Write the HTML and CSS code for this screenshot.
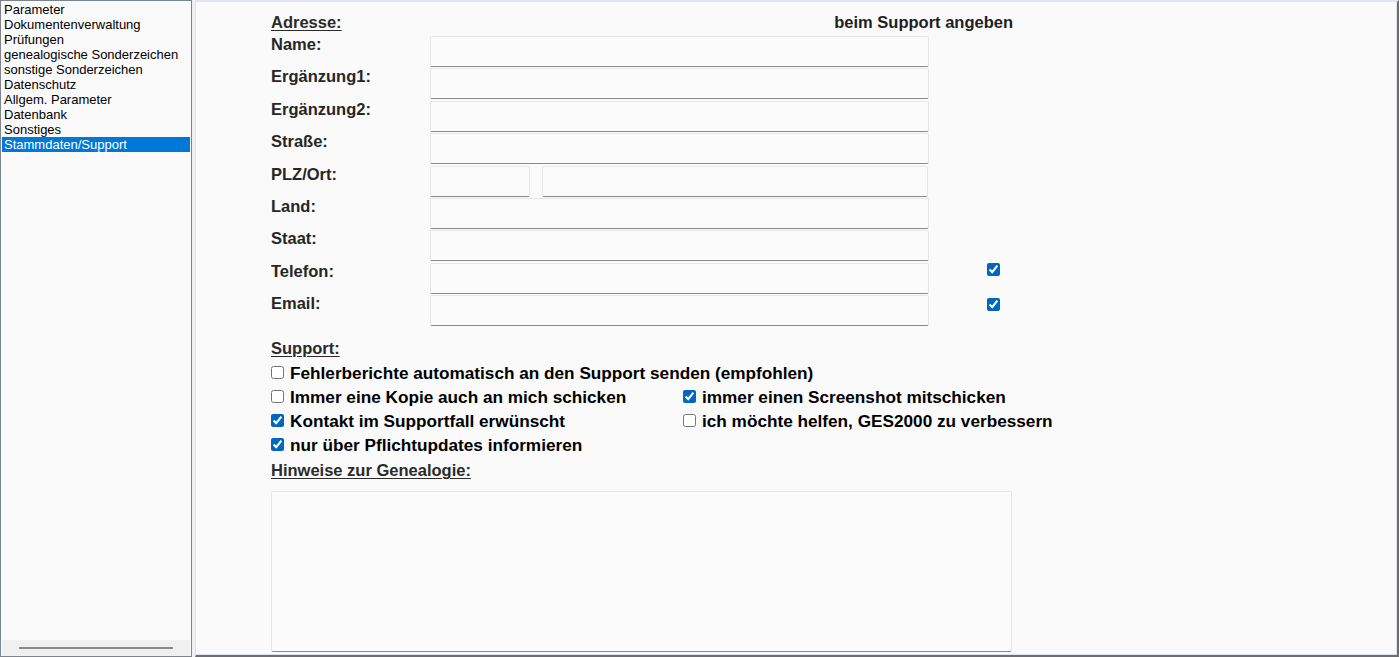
FILE: index.html
```html
<!DOCTYPE html>
<html lang="de">
<head>
<meta charset="utf-8">
<title>Stammdaten/Support</title>
<link rel="stylesheet" href="styles.css">
</head>
<body>
<aside class="sidebar">
  <ul class="nav">
    <li class="nav-item">Parameter</li>
    <li class="nav-item">Dokumentenverwaltung</li>
    <li class="nav-item">Prüfungen</li>
    <li class="nav-item">genealogische Sonderzeichen</li>
    <li class="nav-item">sonstige Sonderzeichen</li>
    <li class="nav-item">Datenschutz</li>
    <li class="nav-item">Allgem. Parameter</li>
    <li class="nav-item">Datenbank</li>
    <li class="nav-item">Sonstiges</li>
    <li class="nav-item is-selected">Stammdaten/Support</li>
  </ul>
  <div class="hscroll"><div class="hscroll-thumb"></div></div>
</aside>
<div class="divider"></div>
<main class="main">
  <div class="header-row">
    <h2 class="section-title">Adresse:</h2>
    <span class="support-hint">beim Support angeben</span>
  </div>
  <div class="address-grid">
    <label class="field-label">Name:</label>
    <input class="field" type="text">
    <span></span>

    <label class="field-label">Ergänzung1:</label>
    <input class="field" type="text">
    <span></span>

    <label class="field-label">Ergänzung2:</label>
    <input class="field" type="text">
    <span></span>

    <label class="field-label">Straße:</label>
    <input class="field" type="text">
    <span></span>

    <label class="field-label">PLZ/Ort:</label>
    <div class="plz-row">
      <input class="field field-plz" type="text">
      <input class="field field-ort" type="text">
    </div>
    <span></span>

    <label class="field-label">Land:</label>
    <input class="field" type="text">
    <span></span>

    <label class="field-label">Staat:</label>
    <input class="field" type="text">
    <span></span>

    <label class="field-label">Telefon:</label>
    <input class="field" type="text">
    <input class="check side-check side-check-tel" type="checkbox" checked>

    <label class="field-label">Email:</label>
    <input class="field" type="text">
    <input class="check side-check" type="checkbox" checked>
  </div>

  <h2 class="section-title support-title">Support:</h2>
  <div class="support-grid">
    <label class="check-row span-2"><input class="check" type="checkbox">Fehlerberichte automatisch an den Support senden (empfohlen)</label>
    <label class="check-row"><input class="check" type="checkbox">Immer eine Kopie auch an mich schicken</label>
    <label class="check-row"><input class="check" type="checkbox" checked>immer einen Screenshot mitschicken</label>
    <label class="check-row"><input class="check" type="checkbox" checked>Kontakt im Supportfall erwünscht</label>
    <label class="check-row"><input class="check" type="checkbox">ich möchte helfen, GES2000 zu verbessern</label>
    <label class="check-row"><input class="check" type="checkbox" checked>nur über Pflichtupdates informieren</label>
  </div>

  <h2 class="section-title notes-title">Hinweise zur Genealogie:</h2>
  <textarea class="notes"></textarea>
</main>
</body>
</html>
```

FILE: styles.css
```css
* { box-sizing: border-box; }

html, body {
  margin: 0;
  padding: 0;
}

body {
  width: 1399px;
  height: 657px;
  display: flex;
  background: #f0f0f0;
  font-family: "Liberation Sans", Arial, sans-serif;
  overflow: hidden;
}

/* ---------- sidebar ---------- */
.sidebar {
  width: 192px;
  height: 657px;
  border: 1px solid #7e848f;
  background: #fafafa;
  display: flex;
  flex-direction: column;
  justify-content: space-between;
  padding: 1px 1px 0 1px;
}

.nav {
  list-style: none;
  margin: 0;
  padding: 0;
}

.nav-item {
  font-size: 13px;
  line-height: 15px;
  height: 15px;
  padding-left: 2px;
  color: #000;
  white-space: nowrap;
}

.nav-item.is-selected {
  background: #0078d7;
  color: #fff;
}

.hscroll {
  height: 16px;
  background: #f0f0f0;
  display: flex;
  align-items: center;
  padding: 0 17px;
}

.hscroll-thumb {
  height: 2px;
  width: 100%;
  background: #8a8a8a;
}

.divider {
  width: 3px;
  flex: none;
}

/* ---------- main ---------- */
.main {
  flex: 1;
  height: 657px;
  background: #fafafa;
  border-top: 2px solid #e1e5ee;
  border-left: 1px solid #e1e5ee;
  border-right: 2px solid #6e6e6e;
  border-bottom: 2px solid #6e6e6e;
  box-shadow: inset -1px -1px 0 #dfe3ee;
  padding: 10px 0 0 75px;
  color: #262626;
  font-size: 16.5px;
  font-weight: bold;
}

.header-row {
  display: flex;
  align-items: center;
  height: 20px;
  width: 742px;
  justify-content: space-between;
}

.section-title {
  margin: 0;
  font-size: 16.5px;
  font-weight: bold;
  line-height: 20px;
  text-decoration: underline;
  text-decoration-thickness: 1px;
  text-underline-offset: 2px;
  color: #2b2b2b;
}

.support-hint {
  line-height: 20px;
  color: #1f1f1f;
}

.address-grid {
  margin-top: 4px;
  display: grid;
  grid-template-columns: 159px 499px 71px;
  grid-auto-rows: 31px;
  row-gap: 1.375px;
}

.field-label {
  line-height: 17px;
  align-self: start;
  white-space: nowrap;
}

.field {
  display: block;
  width: 100%;
  height: 31px;
  margin: 0;
  background: #fbfbfb;
  border: 1px solid #e6e6e6;
  border-bottom: 1px solid #8a8a8a;
  border-radius: 2px;
  outline: none;
  font: inherit;
}

.plz-row {
  display: flex;
  gap: 12px;
}

.field-plz {
  width: 100px;
  flex: none;
}

.field-ort {
  width: 386px;
  flex: none;
}

.check {
  width: 13px;
  height: 13px;
  margin: 0;
  accent-color: #0067c0;
  flex: none;
}

.side-check {
  align-self: start;
  justify-self: end;
  margin-top: 3px;
}

.side-check-tel {
  margin-top: 0;
}

.support-title {
  margin-top: 12px;
}

.support-grid {
  margin-top: 2px;
  display: grid;
  grid-template-columns: 412px auto;
  grid-auto-rows: 24px;
  width: 820px;
}

.check-row {
  display: flex;
  align-items: center;
  gap: 6px;
  color: #000;
  font-size: 17.2px;
  white-space: nowrap;
  line-height: 24px;
  padding-top: 1px;
}

.span-2 {
  grid-column: 1 / span 2;
}

.notes-title {
  margin-top: 4px;
}

.notes {
  display: block;
  margin-top: 11px;
  width: 741px;
  height: 161px;
  resize: none;
  background: #fbfbfb;
  border: 1px solid #e6e6e6;
  border-bottom: 1px solid #8a8a8a;
  border-radius: 2px;
  outline: none;
  font: inherit;
}
```
